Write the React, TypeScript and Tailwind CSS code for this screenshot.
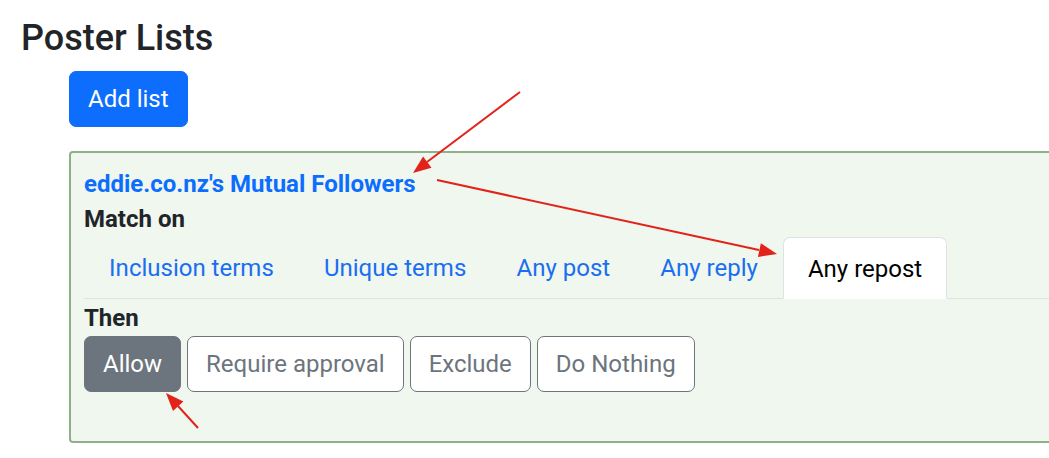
const tabs = ["Inclusion terms", "Unique terms", "Any post", "Any reply", "Any repost"];
const actions = ["Allow", "Require approval", "Exclude", "Do Nothing"];

function Arrows() {
  return (
    <svg className="pointer-events-none absolute inset-0" width="1049" height="458">
      <g stroke="#e2231a" strokeWidth="2" fill="#e2231a">
        <line x1="520" y1="92" x2="427" y2="162" />
        <polygon points="413,173 431.5,167.7 423.1,156.5" stroke="none" />
        <line x1="437" y1="180" x2="759" y2="250" />
        <polygon points="777,254 757.9,257 760.9,243.3" stroke="none" />
        <line x1="198" y1="428" x2="178" y2="406" />
        <polygon points="166,393 183.4,401.6 173,411" stroke="none" />
      </g>
    </svg>
  );
}

export default function App() {
  return (
    <div
      className="relative h-[458px] w-[1049px] overflow-hidden bg-white text-[#212529]"
      style={{ fontFamily: "Roboto, 'Liberation Sans', sans-serif" }}
    >
      <div className="pl-[21px] pt-[17px]">
        <h2 className="text-[36px] font-medium leading-[43px]">Poster Lists</h2>

        <div className="ml-[48px] mt-[11px]">
          <button className="h-[56px] rounded-[7px] border border-[#0d6efd] bg-[#0d6efd] px-[18px] text-[24px] text-white">
            Add list
          </button>

          {/* list card */}
          <div className="mt-[24px] w-[1020px] rounded-[4px] border-[2.5px] border-[#8fb08a] bg-[#eff7ee] px-[13px] pb-[49px] pt-[16px]">
            <a className="block text-[24px] font-bold leading-[30px] text-[#0d6efd]">
              eddie.co.nz's Mutual Followers
            </a>
            <div className="mt-[5px] text-[24px] font-bold leading-[30px]">Match on</div>

            <div className="mt-[3px] flex border-b border-[#dee2e6]">
              {tabs.map((t) =>
                t === "Any repost" ? (
                  <div
                    key={t}
                    className="-mb-px flex h-[62px] items-center rounded-t-[7px] border border-[#dee2e6] border-b-white bg-white px-[24px] pt-[1px] text-[24px] text-black"
                  >
                    {t}
                  </div>
                ) : (
                  <div key={t} className="flex h-[61px] items-center px-[25.1px] pt-[1px] text-[24px] text-[#1a6ef0]">
                    {t}
                  </div>
                )
              )}
            </div>

            <div className="mt-[4px] text-[24px] font-bold leading-[30px]">Then</div>
            <div className="mt-[3px] flex gap-[6px]">
              {actions.map((a) => (
                <button
                  key={a}
                  className={
                    a === "Allow"
                      ? "h-[56px] rounded-[7px] border border-[#6c757d] bg-[#6c757d] px-[18px] text-[24px] text-white"
                      : "h-[56px] rounded-[7px] border border-[#6c757d] bg-white px-[18px] text-[24px] text-[#6c757d]"
                  }
                >
                  {a}
                </button>
              ))}
            </div>
          </div>
        </div>
      </div>
      <Arrows />
    </div>
  );
}
